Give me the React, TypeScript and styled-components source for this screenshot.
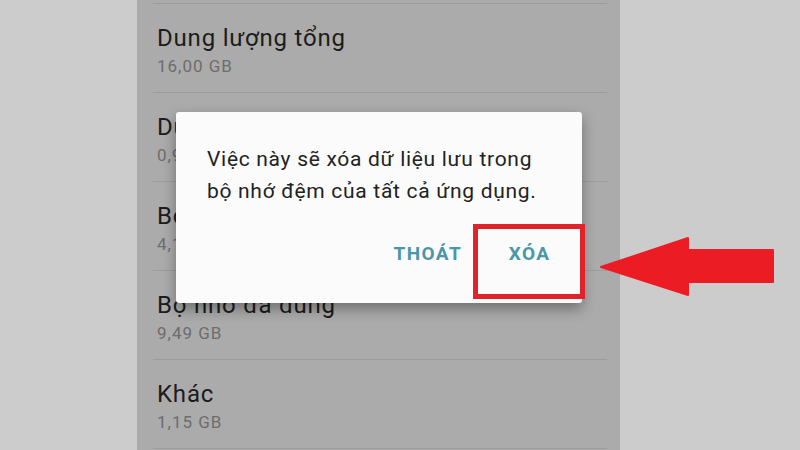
import styled, { createGlobalStyle } from "styled-components";

const GlobalStyle = createGlobalStyle`
  html, body {
    margin: 0;
    padding: 0;
    background: #cccccc;
    font-family: Roboto, "Noto Sans", sans-serif;
  }
`;

const Page = styled.div`
  position: relative;
  width: 800px;
  height: 450px;
  overflow: hidden;
  background: #cccccc;
  display: flex;
`;

const Phone = styled.div`
  margin-left: 137px;
  width: 483px;
  height: 450px;
  background: #ababab;
  display: flex;
  flex-direction: column;
`;

const TopEdge = styled.div`
  height: 3px;
  flex-shrink: 0;
  margin: 0 13px 0 16px;
  border-bottom: 1px solid #9d9d9d;
  box-sizing: content-box;
`;

const Row = styled.div`
  height: 89px;
  flex-shrink: 0;
  margin: 0 13px 0 16px;
  padding: 19px 0 0 4px;
  box-sizing: border-box;
  border-bottom: 1px solid #9d9d9d;
  display: flex;
  flex-direction: column;
  gap: 3px;
`;

const RowTitle = styled.div`
  font-size: 24px;
  letter-spacing: 0.8px;
  line-height: 30px;
  color: #1c1c1c;
`;

const RowValue = styled.div`
  font-size: 17px;
  letter-spacing: 1px;
  line-height: 20px;
  color: #6d6d6d;
`;

const Dialog = styled.div`
  position: absolute;
  left: 176px;
  top: 112px;
  width: 406px;
  height: 191px;
  box-sizing: border-box;
  background: #fbfbfb;
  border-radius: 3px;
  box-shadow: 0 6px 14px rgba(0, 0, 0, 0.35);
  padding: 31px 33px 0 31px;
  display: flex;
  flex-direction: column;
`;

const Message = styled.div`
  font-size: 21px;
  letter-spacing: 0.7px;
  line-height: 32px;
  color: #222222;
  white-space: nowrap;
`;

const Actions = styled.div`
  margin-top: 35px;
  display: flex;
  justify-content: flex-end;
  gap: 48px;
`;

const Action = styled.span`
  font-size: 19px;
  font-weight: 700;
  letter-spacing: 1.4px;
  margin-right: -1.4px;
  line-height: 24px;
  color: #4a97a8;
`;

const Highlight = styled.div`
  position: absolute;
  left: 473px;
  top: 224px;
  width: 112px;
  height: 75px;
  box-sizing: border-box;
  border: 5px solid #e0232b;
`;

const Arrow = styled.svg`
  position: absolute;
  left: 598px;
  top: 234px;
`;

const rows = [
  { title: "Dung lượng tổng", value: "16,00 GB" },
  { title: "Dung lượng hệ thống", value: "0,96 GB" },
  { title: "Bộ nhớ khả dụng", value: "4,11 GB" },
  { title: "Bộ nhớ đã dùng", value: "9,49 GB" },
  { title: "Khác", value: "1,15 GB" },
];

export default function App() {
  return (
    <>
      <GlobalStyle />
      <Page>
        <Phone>
          <TopEdge />
          {rows.map((r) => (
            <Row key={r.title}>
              <RowTitle>{r.title}</RowTitle>
              <RowValue>{r.value}</RowValue>
            </Row>
          ))}
        </Phone>

        <Dialog>
          <Message>
            Việc này sẽ xóa dữ liệu lưu trong
            <br />
            bộ nhớ đệm của tất cả ứng dụng.
          </Message>
          <Actions>
            <Action>THOÁT</Action>
            <Action>XÓA</Action>
          </Actions>
        </Dialog>

        <Highlight />

        <Arrow width="180" height="64" viewBox="0 0 180 64">
          <polygon
            points="3,33 90,4 90,16 175,16 175,48 90,48 90,61"
            fill="#ec1c24"
            stroke="#ec1c24"
            strokeWidth="2"
            strokeLinejoin="round"
          />
        </Arrow>
      </Page>
    </>
  );
}
